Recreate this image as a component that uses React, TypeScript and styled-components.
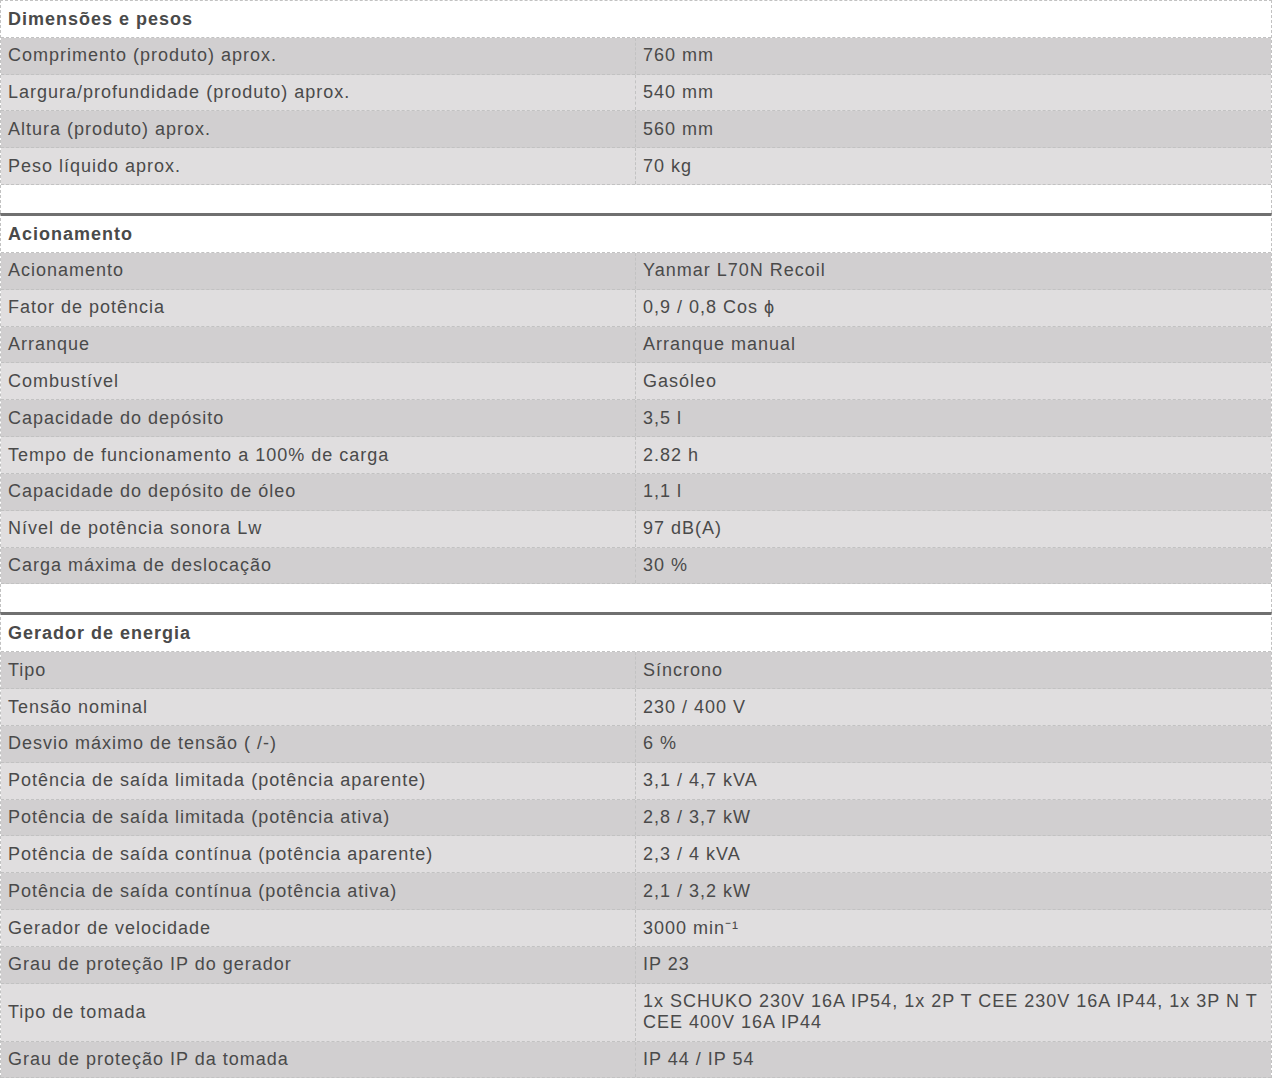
import React from 'react';
import styled, {createGlobalStyle} from 'styled-components';

const GlobalStyle = createGlobalStyle`
  html, body {
    margin: 0;
    padding: 0;
    background: #ffffff;
  }
  body {
    font-family: 'Liberation Sans', Arial, sans-serif;
    font-size: 18px;
    letter-spacing: 1px;
    color: #4a4a4a;
  }
`;

const Sheet = styled.div`
  width: 1272px;
  box-sizing: border-box;
`;

const Section = styled.div<{$first?: boolean}>`
  border-left: 1px dashed #c2c2c2;
  border-right: 1px dashed #c2c2c2;
  border-top: ${p => (p.$first ? '1px dashed #c2c2c2' : '3px solid #707070')};
`;

const Header = styled.div`
  padding: 7.5px 7px;
  line-height: 20.75px;
  font-weight: bold;
  background: #ffffff;
  border-bottom: 1px dashed #c2c2c2;
`;

const Row = styled.div<{$alt: boolean}>`
  display: grid;
  grid-template-columns: 634px 1fr;
  background: ${p => (p.$alt ? '#e0dedf' : '#d1cfd0')};
  border-bottom: 1px dashed #c2c2c2;
`;

const Label = styled.div`
  padding: 7.5px 7px;
  line-height: 20.85px;
  display: flex;
  align-items: center;
`;

const Value = styled.div`
  padding: 7.5px 4px 7.5px 7px;
  line-height: 20.85px;
  border-left: 1px dashed #c2c2c2;
  display: flex;
  align-items: center;
`;

const Spacer = styled.div`
  height: 28px;
  background: #ffffff;
`;

interface ISection {
  title: string;
  rows: Array<[string, string]>;
}

const sections: ISection[] = [
  {
    title: 'Dimensões e pesos',
    rows: [
      ['Comprimento (produto) aprox.', '760 mm'],
      ['Largura/profundidade (produto) aprox.', '540 mm'],
      ['Altura (produto) aprox.', '560 mm'],
      ['Peso líquido aprox.', '70 kg']
    ]
  },
  {
    title: 'Acionamento',
    rows: [
      ['Acionamento', 'Yanmar L70N Recoil'],
      ['Fator de potência', '0,9 / 0,8 Cos ϕ'],
      ['Arranque', 'Arranque manual'],
      ['Combustível', 'Gasóleo'],
      ['Capacidade do depósito', '3,5 l'],
      ['Tempo de funcionamento a 100% de carga', '2.82 h'],
      ['Capacidade do depósito de óleo', '1,1 l'],
      ['Nível de potência sonora Lw', '97 dB(A)'],
      ['Carga máxima de deslocação', '30 %']
    ]
  },
  {
    title: 'Gerador de energia',
    rows: [
      ['Tipo', 'Síncrono'],
      ['Tensão nominal', '230 / 400 V'],
      ['Desvio máximo de tensão ( /-)', '6 %'],
      ['Potência de saída limitada (potência aparente)', '3,1 / 4,7 kVA'],
      ['Potência de saída limitada (potência ativa)', '2,8 / 3,7 kW'],
      ['Potência de saída contínua (potência aparente)', '2,3 / 4 kVA'],
      ['Potência de saída contínua (potência ativa)', '2,1 / 3,2 kW'],
      ['Gerador de velocidade', '3000 min⁻¹'],
      ['Grau de proteção IP do gerador', 'IP 23'],
      ['Tipo de tomada', '1x SCHUKO 230V 16A IP54, 1x 2P T CEE 230V 16A IP44, 1x 3P N T CEE 400V 16A IP44'],
      ['Grau de proteção IP da tomada', 'IP 44 / IP 54']
    ]
  }
];

export default function App() {
  return (
    <>
      <GlobalStyle />
      <Sheet>
        {sections.map((section, si) => (
          <Section key={section.title} $first={si === 0}>
            <Header>{section.title}</Header>
            {section.rows.map(([label, value], i) => (
              <Row key={label} $alt={i % 2 === 1}>
                <Label>{label}</Label>
                <Value>{value}</Value>
              </Row>
            ))}
            {si < sections.length - 1 && <Spacer />}
          </Section>
        ))}
      </Sheet>
    </>
  );
}
